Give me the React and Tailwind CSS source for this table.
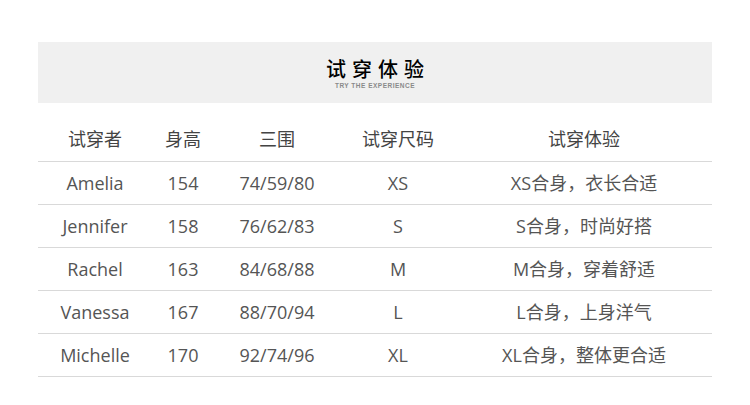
export default function App() {
  const rows = [
    ["Amelia", "154", "74/59/80", "XS", "XS合身，衣长合适"],
    ["Jennifer", "158", "76/62/83", "S", "S合身，时尚好搭"],
    ["Rachel", "163", "84/68/88", "M", "M合身，穿着舒适"],
    ["Vanessa", "167", "88/70/94", "L", "L合身，上身洋气"],
    ["Michelle", "170", "92/74/96", "XL", "XL合身，整体更合适"],
  ];
  const cols = ["w-[114px]", "w-[62px]", "w-[126px]", "w-[116px]", "flex-1"];
  const font = { fontFamily: '"Open Sans", "Noto Sans CJK SC", sans-serif' };
  return (
    <div className="w-[750px] h-[405px] bg-white pt-[42px] px-[38px]" style={font}>
      <div className="h-[61px] bg-[#f0f0f0] flex flex-col items-center pt-[16px]">
        <div className="text-[20px] leading-[22px] text-black font-medium tracking-[6px] pl-[6px]" style={{ fontFamily: '"Noto Sans CJK SC", sans-serif' }}>试穿体验</div>
        <div className="mt-[2px] text-[6.5px] leading-[7px] text-[#8a8a8a] font-bold tracking-[0.5px]" style={{ fontFamily: '"Liberation Sans", sans-serif' }}>TRY THE EXPERIENCE</div>
      </div>
      <div className="flex h-[59px] items-end pb-[10px] border-b border-[#d9d9d9] text-[18px] leading-[24px] text-[#444]">
        {["试穿者", "身高", "三围", "试穿尺码", "试穿体验"].map((h, i) => (
          <div key={i} className={`${cols[i]} text-center`}>{h}</div>
        ))}
      </div>
      {rows.map((r, ri) => (
        <div key={ri} className="flex h-[43px] items-center border-b border-[#d9d9d9] text-[18px] text-[#555]">
          {r.map((c, i) => (
            <div key={i} className={`${cols[i]} text-center`}>{c}</div>
          ))}
        </div>
      ))}
    </div>
  );
}
